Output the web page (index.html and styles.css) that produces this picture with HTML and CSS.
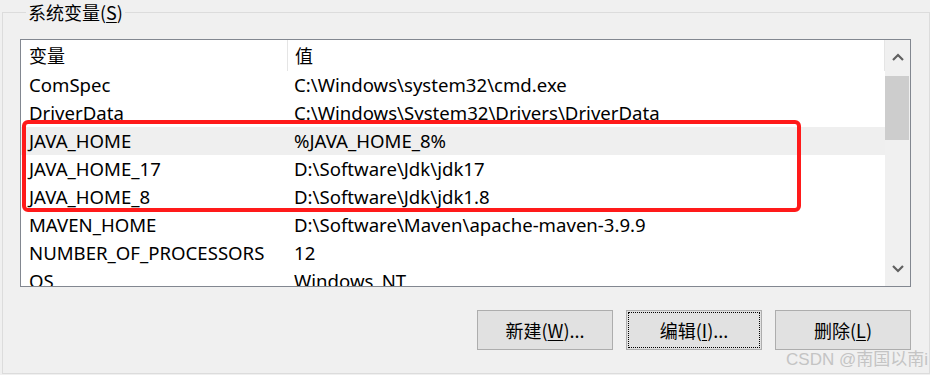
FILE: index.html
```html
<!DOCTYPE html>
<html>
<head>
<meta charset="utf-8">
<title>系统变量</title>
<link rel="stylesheet" href="styles.css">
</head>
<body>

<fieldset class="group">
	<legend>系统变量(<u>S</u>)</legend>

	<div class="listbox">
		<div class="list">
			<div class="row head">
				<div class="name">变量</div>
				<div class="value">值</div>
			</div>
			<div class="row"><div class="name">ComSpec</div><div class="value">C:\Windows\system32\cmd.exe</div></div>
			<div class="row"><div class="name">DriverData</div><div class="value">C:\Windows\System32\Drivers\DriverData</div></div>
			<div class="row sel"><div class="name">JAVA_HOME</div><div class="value">%JAVA_HOME_8%</div></div>
			<div class="row"><div class="name">JAVA_HOME_17</div><div class="value">D:\Software\Jdk\jdk17</div></div>
			<div class="row"><div class="name">JAVA_HOME_8</div><div class="value">D:\Software\Jdk\jdk1.8</div></div>
			<div class="row"><div class="name">MAVEN_HOME</div><div class="value">D:\Software\Maven\apache-maven-3.9.9</div></div>
			<div class="row"><div class="name">NUMBER_OF_PROCESSORS</div><div class="value">12</div></div>
			<div class="row"><div class="name">OS</div><div class="value">Windows_NT</div></div>
		</div>
		<div class="scroll">
			<div class="arrow">
				<svg width="12" height="8" viewBox="0 0 12 8"><path d="M1 7 L6 2 L11 7" fill="none" stroke="#606060" stroke-width="2.2"/></svg>
			</div>
			<div class="track"><div class="thumb"></div></div>
			<div class="arrow">
				<svg width="12" height="8" viewBox="0 0 12 8"><path d="M1 1 L6 6 L11 1" fill="none" stroke="#606060" stroke-width="2.2"/></svg>
			</div>
		</div>
		<div class="mark"></div>
	</div>

	<div class="buttons">
		<button class="btn">新建(<u>W</u>)...</button>
		<button class="btn focus">编辑(<u>I</u>)...</button>
		<button class="btn">删除(<u>L</u>)</button>
	</div>

	<div class="watermark">CSDN @南国以南i</div>
</fieldset>

</body>
</html>
```

FILE: styles.css
```css
html, body{
	margin:0;
	background:#f0f0f0;
}
body{
	width:930px;
	height:375px;
	overflow:hidden;
	font-family:"Noto Sans", "Noto Sans CJK SC", sans-serif;
	font-size:18.6px;
	color:#000;
}
.group{
	position:relative;
	box-sizing:border-box;
	width:928px;
	height:374px;
	margin:0 0 0 2px;
	padding:15px 18px 0 17px;
	border:1px solid #dcdcdc;
	border-radius:0;
}
.group legend{
	margin-left:6px;
	padding:0 2px;
	line-height:24px;
	font-family:"Noto Sans CJK SC", sans-serif;
	font-size:18px;
	color:#000;
}
u{
	text-underline-offset:2px;
}

.listbox{
	position:relative;
	display:flex;
	box-sizing:border-box;
	width:891px;
	height:248px;
	border:1px solid #828790;
	background:#fff;
	overflow:hidden;
}
.list{
	flex:1;
}
.row{
	display:flex;
	height:28px;
	line-height:28px;
	white-space:nowrap;
}
.row.head{
	height:31px;
	line-height:31px;
	font-family:"Noto Sans CJK SC", sans-serif;
	font-size:18px;
}
.row.sel{
	background:#efefef;
}
.name{
	box-sizing:border-box;
	width:266px;
	padding-left:8px;
}
.value{
	flex:1;
	padding-left:7px;
}
.head .value{
	border-left:1px solid #e5e5e5;
	border-right:1px solid #e5e5e5;
}

.scroll{
	display:flex;
	flex-direction:column;
	width:25px;
	background:#f0f0f0;
}
.arrow{
	display:flex;
	align-items:center;
	justify-content:center;
	height:34px;
}
.track{
	flex:1;
	padding-top:2px;
}
.thumb{
	width:24px;
	height:64px;
	background:#cdcdcd;
}

.mark{
	position:absolute;
	left:1px;
	top:80px;
	box-sizing:border-box;
	width:779px;
	height:92px;
	border:4px solid #ff1a1a;
	border-radius:6px;
}

.buttons{
	display:flex;
	justify-content:flex-end;
	gap:13px;
	width:891px;
	margin-top:23px;
}
.btn{
	box-sizing:border-box;
	width:136px;
	height:40px;
	border:1px solid #adadad;
	background:#e1e1e1;
	font-family:"Noto Sans CJK SC", sans-serif;
	font-size:18px;
	color:#000;
	padding:0;
}
.btn.focus{
	outline:1px dotted #000;
	outline-offset:-3px;
}

.watermark{
	position:absolute;
	right:1px;
	bottom:3px;
	font-family:"Liberation Sans", "Noto Sans CJK SC", sans-serif;
	font-size:17px;
	color:#c4c4c4;
}
```
